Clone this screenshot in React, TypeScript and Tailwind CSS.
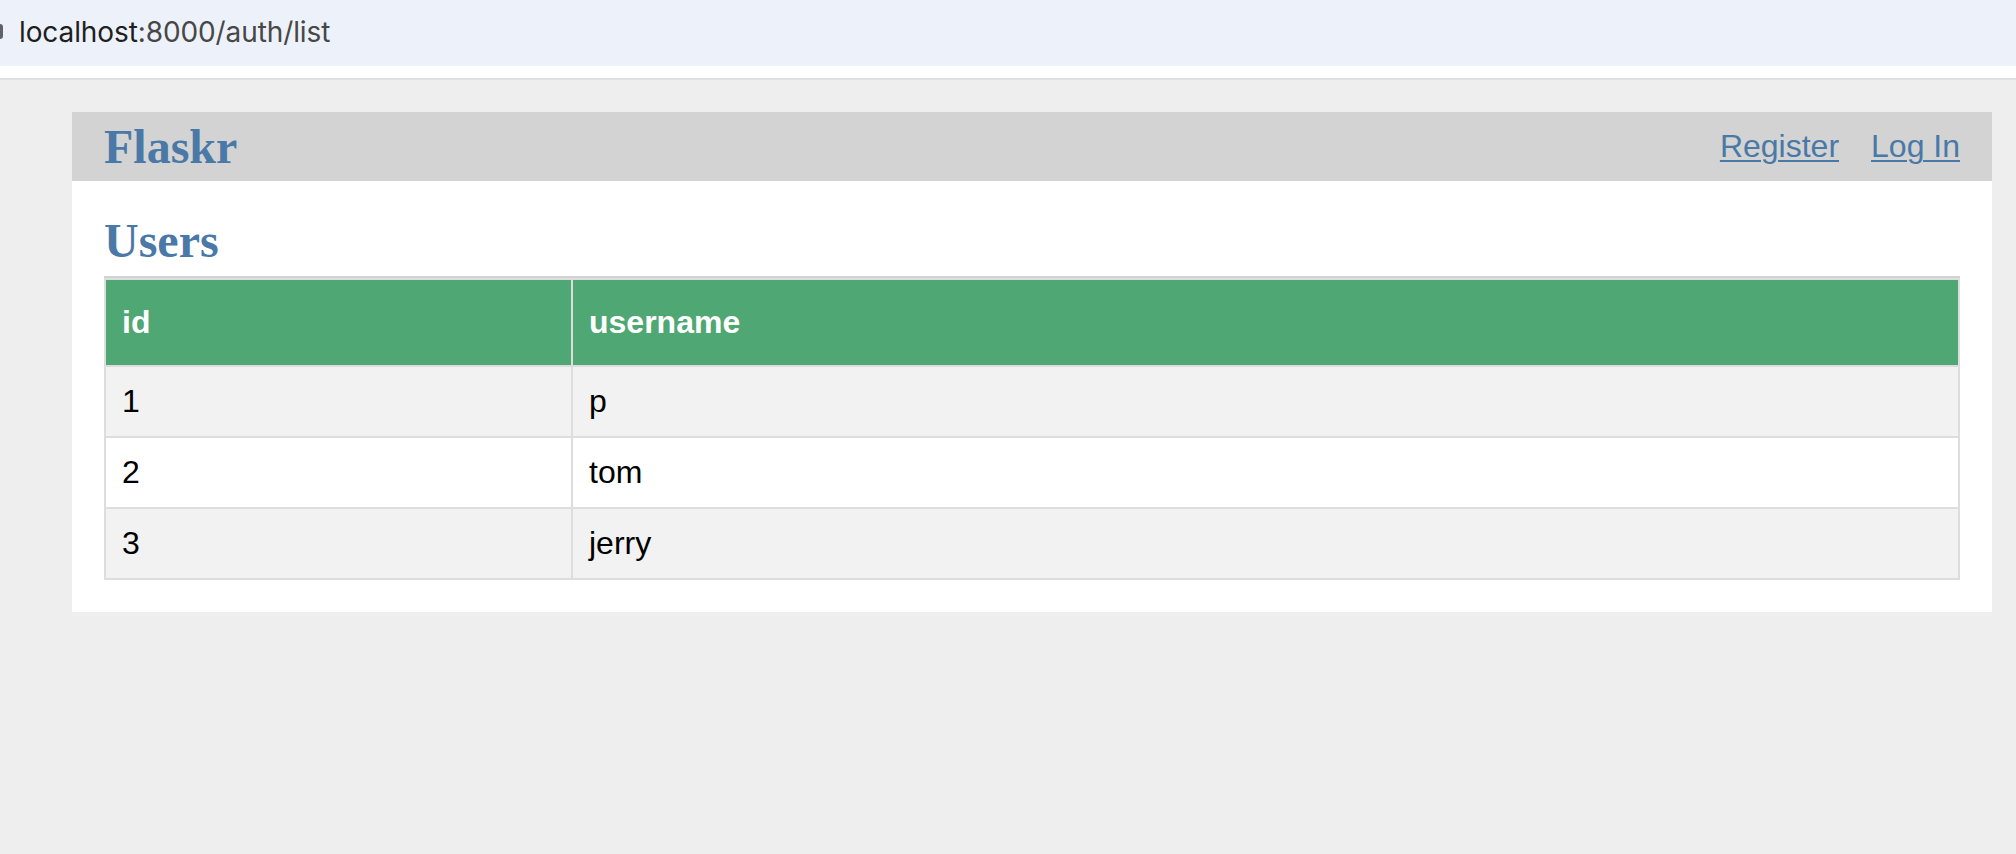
import React from "react";

const rows = [
  { id: 1, username: "p" },
  { id: 2, username: "tom" },
  { id: 3, username: "jerry" },
];

export default function App() {
  return (
    <div className="min-h-screen w-full bg-[#eeeeee] font-['Liberation_Sans',Arial,sans-serif]">
      {/* browser address bar */}
      <div className="relative flex h-[66px] items-center bg-[#edf2fa] pb-[2px] pl-[19px]">
        <div className="absolute left-0 top-[24px] h-[15px] w-[3px] rounded-r-full bg-[#5f6368]" />
        <span className="font-['Inter',sans-serif] text-[28px] leading-[34px] tracking-[-0.1px]">
          <span className="text-[#1f1f1f]">localhost</span>
          <span className="text-[#474747]">:8000/auth/list</span>
        </span>
      </div>
      <div className="h-[12px] bg-white" />
      <div className="h-[2px] bg-[#e0e0e0]" />

      {/* page */}
      <div className="pb-[32px] pl-[72px] pr-[24px] pt-[32px]">
        <div className="w-[1920px] bg-white">
          <nav className="flex items-center bg-[#d3d3d3] px-[16px]">
            <h1 className="m-0 flex-auto font-['Liberation_Serif','Times_New_Roman',serif] text-[48px] font-bold leading-[55px]">
              <a href="#" className="px-[16px] py-[8px] text-[#4a79a7] no-underline">
                Flaskr
              </a>
            </h1>
            <ul className="m-0 flex list-none p-0">
              <li>
                <a href="#" className="block p-[16px] text-[32px] leading-[37px] text-[#4a79a7] underline decoration-[2px] underline-offset-[3px]">
                  Register
                </a>
              </li>
              <li>
                <a href="#" className="block p-[16px] text-[32px] leading-[37px] text-[#4a79a7] underline decoration-[2px] underline-offset-[3px]">
                  Log In
                </a>
              </li>
            </ul>
          </nav>

          <section className="px-[32px] pb-[32px]">
            <header className="flex items-end border-b-2 border-[#d3d3d3]">
              <h1 className="mb-[8px] mt-[32px] flex-auto font-['Liberation_Serif','Times_New_Roman',serif] text-[48px] font-bold leading-[55px] text-[#4a79a7]">
                Users
              </h1>
            </header>
            <table className="w-full table-fixed border-collapse border-2 border-[#dddddd] text-[32px] leading-[37px]">
              <colgroup>
                <col className="w-[467px]" />
                <col />
              </colgroup>
              <tbody>
                <tr className="bg-[#4fa774]">
                  <th className="border-2 border-[#dddddd] px-[16px] py-[24px] text-left font-bold text-white">id</th>
                  <th className="border-2 border-[#dddddd] px-[16px] py-[24px] text-left font-bold text-white">username</th>
                </tr>
                {rows.map((r, i) => (
                  <tr key={r.id} className={i % 2 === 0 ? "bg-[#f2f2f2]" : "bg-white"}>
                    <td className="border-2 border-[#dddddd] p-[16px] text-black">{r.id}</td>
                    <td className="border-2 border-[#dddddd] p-[16px] text-black">{r.username}</td>
                  </tr>
                ))}
              </tbody>
            </table>
          </section>
        </div>
      </div>
    </div>
  );
}
